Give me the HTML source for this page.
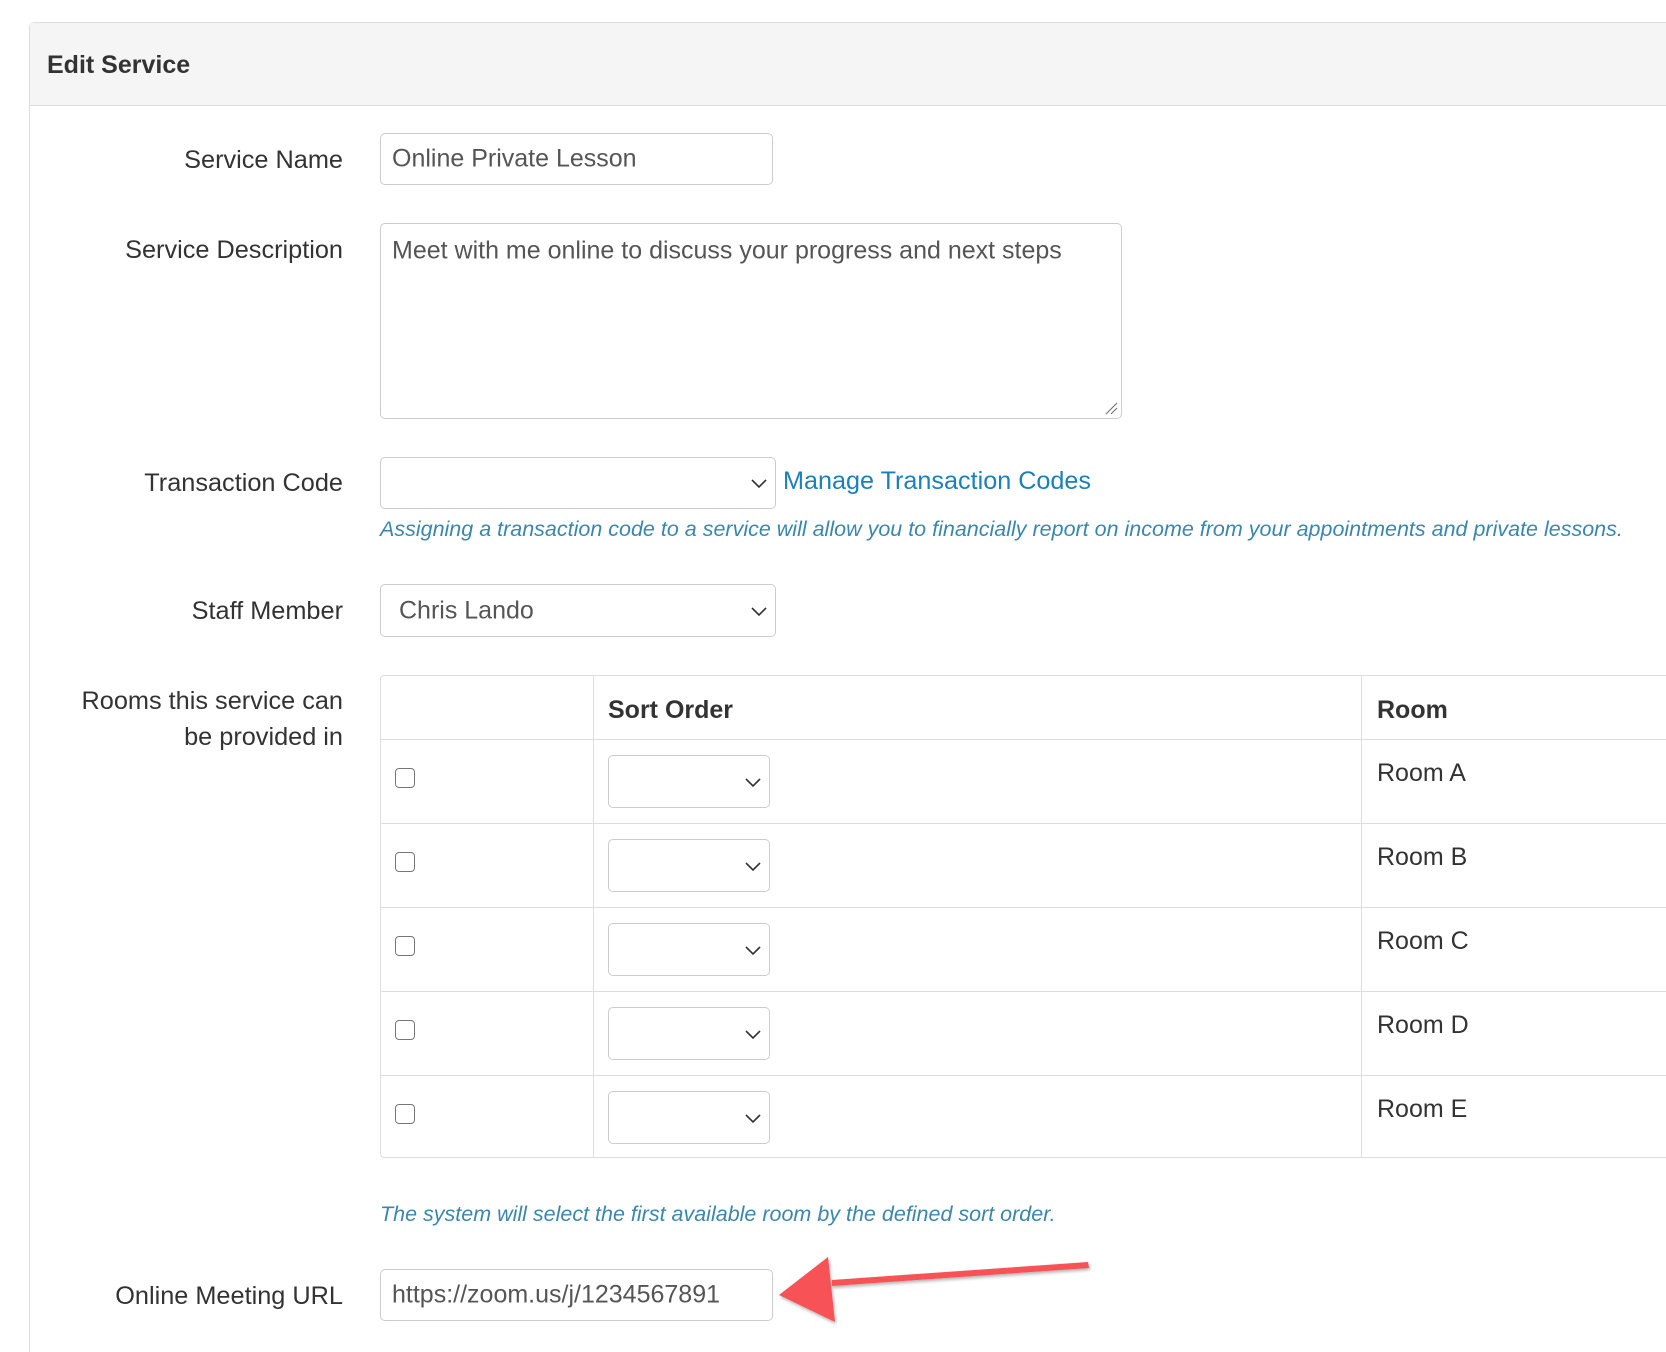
<!DOCTYPE html>
<html style="overflow:hidden;height:1352px"><head><meta charset="utf-8"><style>
*{box-sizing:border-box}
body{margin:0;width:1666px;height:1352px;background:#fff;font-family:"Liberation Sans",Arial,sans-serif;color:#333;position:relative;overflow:hidden}
.panel{position:absolute;left:29px;top:22px;width:1700px;height:1330px;border:1px solid #ddd;border-bottom:none;border-radius:5px 5px 0 0}
.hdr{position:absolute;left:0;top:0;right:0;height:83px;background:#f5f5f5;border-bottom:1px solid #ddd}
.hdr span{position:absolute;left:17px;top:28px;font-size:25px;font-weight:bold;color:#333}
.lbl{position:absolute;right:1323px;font-size:25.3px;color:#333;text-align:right;line-height:36px;white-space:nowrap}
.box{position:absolute;border:1px solid #ccc;border-radius:5px;background:#fff;font-size:25px;color:#555;white-space:nowrap}
.box span{position:absolute;left:11px;top:50%;transform:translateY(-50%)}
.chev{position:absolute;right:8px;top:50%;margin-top:-6px}
.help{position:absolute;left:380px;font-size:21.5px;font-style:italic;color:#3a87ad;white-space:nowrap}
.tbl{position:absolute;left:380px;top:675px;width:1400px;height:483px;border:1px solid #ddd;border-radius:4px}
.hl{position:absolute;left:0;right:0;height:1px;background:#ddd}
.vl{position:absolute;top:0;bottom:0;width:1px;background:#ddd}
.th{position:absolute;font-weight:bold;font-size:25px;color:#333}
.cb{position:absolute;width:20px;height:20px;border:1.5px solid #777;border-radius:4px;background:#fff}
.room{position:absolute;font-size:25px;color:#333;white-space:nowrap}
</style></head><body>
<div class="panel"><div class="hdr"><span>Edit Service</span></div></div>

<div class="lbl" style="top:142px">Service Name</div>
<div class="box" style="left:380px;top:133px;width:393px;height:52px"><span>Online Private Lesson</span></div>

<div class="lbl" style="top:232px">Service Description</div>
<div class="box" style="left:380px;top:223px;width:742px;height:196px"><span style="top:27px">Meet with me online to discuss your progress and next steps</span>
<svg style="position:absolute;right:3px;bottom:3px" width="14" height="14"><path d="M2 13L13 2M7 13L13 7" stroke="#777" stroke-width="1.2"/></svg></div>

<div class="lbl" style="top:465px">Transaction Code</div>
<div class="box" style="left:380px;top:457px;width:396px;height:52px"><svg class="chev" width="16" height="12"><path d="M1 3L8 10L15 3" stroke="#333" stroke-width="1.6" fill="none"/></svg></div>
<div style="position:absolute;left:783px;top:467px;font-size:25.2px;color:#1a7fbd;white-space:nowrap">Manage Transaction Codes</div>
<div class="help" style="top:517px">Assigning a transaction code to a service will allow you to financially report on income from your appointments and private lessons.</div>

<div class="lbl" style="top:593px">Staff Member</div>
<div class="box" style="left:380px;top:584px;width:396px;height:53px"><span style="left:18px">Chris Lando</span><svg class="chev" width="16" height="12"><path d="M1 3L8 10L15 3" stroke="#333" stroke-width="1.6" fill="none"/></svg></div>

<div class="lbl" style="top:683px;line-height:36px">Rooms this service can<br>be provided in</div>
<div class="tbl">
<div class="vl" style="left:212px"></div><div class="vl" style="left:980px"></div>
<div class="hl" style="top:63px"></div><div class="hl" style="top:147px"></div><div class="hl" style="top:231px"></div><div class="hl" style="top:315px"></div><div class="hl" style="top:399px"></div>
<div class="th" style="left:227px;top:20px">Sort Order</div>
<div class="th" style="left:996px;top:20px">Room</div>
</div>

<div class="help" style="top:1202px">The system will select the first available room by the defined sort order.</div>

<div class="lbl" style="top:1278px">Online Meeting URL</div>
<div class="box" style="left:380px;top:1269px;width:393px;height:52px"><span>https://zoom.us/j/1234567891</span></div>

<svg style="position:absolute;left:0;top:0" width="1666" height="1352">
<defs><filter id="s"><feDropShadow dx="1" dy="2" stdDeviation="1.5" flood-opacity="0.3"/></filter></defs>
<g fill="#f75257" filter="url(#s)">
<path d="M1088 1262L1089 1268L832 1286L832 1280Z"/>
<path d="M779 1295L828 1257L835 1322Z"/>
</g>
</svg>

<div class="cb" style="left:395px;top:768px"></div>
<div class="box" style="left:608px;top:755px;width:162px;height:53px"><svg class="chev" width="16" height="12"><path d="M1 3L8 10L15 3" stroke="#333" stroke-width="1.6" fill="none"/></svg></div>
<div class="room" style="left:1377px;top:759px">Room A</div>

<div class="cb" style="left:395px;top:852px"></div>
<div class="box" style="left:608px;top:839px;width:162px;height:53px"><svg class="chev" width="16" height="12"><path d="M1 3L8 10L15 3" stroke="#333" stroke-width="1.6" fill="none"/></svg></div>
<div class="room" style="left:1377px;top:843px">Room B</div>

<div class="cb" style="left:395px;top:936px"></div>
<div class="box" style="left:608px;top:923px;width:162px;height:53px"><svg class="chev" width="16" height="12"><path d="M1 3L8 10L15 3" stroke="#333" stroke-width="1.6" fill="none"/></svg></div>
<div class="room" style="left:1377px;top:927px">Room C</div>

<div class="cb" style="left:395px;top:1020px"></div>
<div class="box" style="left:608px;top:1007px;width:162px;height:53px"><svg class="chev" width="16" height="12"><path d="M1 3L8 10L15 3" stroke="#333" stroke-width="1.6" fill="none"/></svg></div>
<div class="room" style="left:1377px;top:1011px">Room D</div>

<div class="cb" style="left:395px;top:1104px"></div>
<div class="box" style="left:608px;top:1091px;width:162px;height:53px"><svg class="chev" width="16" height="12"><path d="M1 3L8 10L15 3" stroke="#333" stroke-width="1.6" fill="none"/></svg></div>
<div class="room" style="left:1377px;top:1095px">Room E</div>
</body></html>
